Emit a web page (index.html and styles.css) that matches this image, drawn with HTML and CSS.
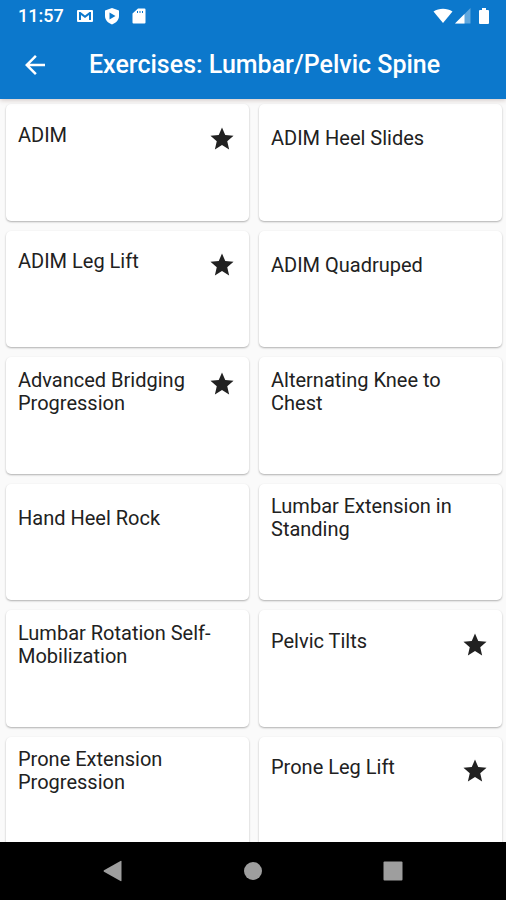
FILE: index.html
```html
<!DOCTYPE html>
<html lang="en">
<head>
<meta charset="utf-8">
<meta name="viewport" content="width=device-width, initial-scale=1">
<title>Exercises: Lumbar/Pelvic Spine</title>
<link rel="stylesheet" href="styles.css">
</head>
<body>
<svg class="defs" aria-hidden="true">
  <symbol id="star" viewBox="-1 -1 26 26"><path d="M12 17.27 18.18 21l-1.64-7.03L22 9.24l-7.19-.61L12 2 9.19 8.63 2 9.24l5.46 4.73L5.82 21z"/></symbol>
</svg>
<header class="top">
  <div class="status">
    <span class="clock">11:57</span>
    <div class="notices">
      <svg class="notice" viewBox="0 0 18 18" aria-hidden="true"><path fill-rule="evenodd" d="M2 3h14q1 0 1 1v10q0 1-1 1H2q-1 0-1-1V4q0-1 1-1zM3 5v8h2V8l4 3 4-3v5h2V5h-1.500L9 8.500 4.500 5z"/></svg>
      <svg class="notice" viewBox="0 0 18 18" aria-hidden="true"><path fill-rule="evenodd" d="M9 1l7 2.500V9c0 4-3 7-7 8.500C5 16 2 13 2 9V3.500zM6.500 5.500v7L12.500 9z"/></svg>
      <svg class="notice" viewBox="0 0 18 18" aria-hidden="true"><path fill-rule="evenodd" d="M8 1.500h6.500q1 0 1 1v13q0 1-1 1h-11q-1 0-1-1V6.500zM7 4v2h1V4zM9.500 4v2h1V4zM12 4v2h1V4z"/></svg>
    </div>
    <div class="signals">
      <svg class="wifi" viewBox="0 0 20 18" aria-hidden="true"><path d="M0.500 4.500C6 .8 14 .8 19.500 4.500L10 16z"/></svg>
      <svg class="cell" viewBox="0 0 16 18" aria-hidden="true"><path class="dim" d="M15.500 1v15.500H0z"/><path d="M9.500 7v9.500H0z"/></svg>
      <svg class="battery" viewBox="0 0 12 18" aria-hidden="true"><path d="M4 1h4v2h2q1 0 1 1v12q0 1-1 1H2q-1 0-1-1V4q0-1 1-1h2z"/></svg>
    </div>
  </div>
  <div class="appbar">
    <button class="back" type="button" aria-label="Back"><svg viewBox="0 0 24 24" aria-hidden="true"><path d="M20 11H7.830l5.590-5.590L12 4l-8 8 8 8 1.410-1.410L7.830 13H20z"/></svg></button>
    <h1 class="title">Exercises: Lumbar/Pelvic Spine</h1>
  </div>
</header>
<main class="content">
  <ul class="grid">
    <li class="cell-box"><div class="card"><div class="tile"><div class="row"><h2 class="name">ADIM</h2><svg class="star" role="img" aria-label="Favorite"><use href="#star"/></svg></div></div></div></li>
    <li class="cell-box"><div class="card"><div class="tile"><div class="row"><h2 class="name">ADIM Heel Slides</h2></div></div></div></li>
    <li class="cell-box"><div class="card"><div class="tile"><div class="row"><h2 class="name">ADIM Leg Lift</h2><svg class="star" role="img" aria-label="Favorite"><use href="#star"/></svg></div></div></div></li>
    <li class="cell-box"><div class="card"><div class="tile"><div class="row"><h2 class="name">ADIM Quadruped</h2></div></div></div></li>
    <li class="cell-box"><div class="card"><div class="tile"><div class="row"><h2 class="name">Advanced Bridging Progression</h2><svg class="star" role="img" aria-label="Favorite"><use href="#star"/></svg></div></div></div></li>
    <li class="cell-box"><div class="card"><div class="tile"><div class="row"><h2 class="name">Alternating Knee to Chest</h2></div></div></div></li>
    <li class="cell-box"><div class="card"><div class="tile"><div class="row"><h2 class="name">Hand Heel Rock</h2></div></div></div></li>
    <li class="cell-box"><div class="card"><div class="tile"><div class="row"><h2 class="name">Lumbar Extension in Standing</h2></div></div></div></li>
    <li class="cell-box"><div class="card"><div class="tile"><div class="row"><h2 class="name">Lumbar Rotation Self-Mobilization</h2></div></div></div></li>
    <li class="cell-box"><div class="card"><div class="tile"><div class="row"><h2 class="name">Pelvic Tilts</h2><svg class="star" role="img" aria-label="Favorite"><use href="#star"/></svg></div></div></div></li>
    <li class="cell-box"><div class="card"><div class="tile"><div class="row"><h2 class="name">Prone Extension Progression</h2></div></div></div></li>
    <li class="cell-box"><div class="card"><div class="tile"><div class="row"><h2 class="name">Prone Leg Lift</h2><svg class="star" role="img" aria-label="Favorite"><use href="#star"/></svg></div></div></div></li>
  </ul>
</main>
<nav class="nav" aria-label="System">
  <button class="key" type="button" aria-label="Back"><svg viewBox="0 0 24 24" aria-hidden="true"><path d="M20.500 2.500v19q0 1-1 .5L3 12.700q-1-.7 0-1.400L19.500 2q1-.5 1 .5z"/></svg></button>
  <button class="key" type="button" aria-label="Home"><svg viewBox="0 0 24 24" aria-hidden="true"><circle cx="12" cy="12" r="9"/></svg></button>
  <button class="key" type="button" aria-label="Recent apps"><svg viewBox="0 0 24 24" aria-hidden="true"><rect x="2.500" y="2.500" width="19" height="19" rx="1"/></svg></button>
</nav>
</body>
</html>
```

FILE: styles.css
```css
* {
  box-sizing: border-box;
}

body {
  margin: 0;
  height: 100vh;
  display: flex;
  flex-direction: column;
  background: #fafafa;
  color: #212121;
  font-family: Roboto, sans-serif;
}

button {
  border: 0;
  padding: 0;
  background: none;
  color: inherit;
  cursor: pointer;
}

svg {
  display: block;
  fill: currentColor;
}

.defs {
  position: absolute;
  width: 0;
  height: 0;
}

.top {
  flex: none;
  position: relative;
  background: #0c78cc;
  color: #fff;
  box-shadow: 0 1px 5px rgba(80, 30, 20, 0.25);
}

.status {
  display: flex;
  align-items: center;
  height: 31px;
  padding: 0 16px 0 18px;
}

.clock {
  font-size: 18px;
  font-weight: 500;
  line-height: 31px;
}

.notices {
  display: flex;
  gap: 9px;
  margin-left: 12px;
}

.notice {
  width: 18px;
  height: 18px;
}

.signals {
  display: flex;
  margin-left: auto;
}

.wifi {
  width: 20px;
  height: 18px;
}

.cell {
  width: 16px;
  height: 18px;
  margin: 0 7px 0 2px;
}

.dim {
  opacity: 0.35;
}

.battery {
  width: 12px;
  height: 18px;
}

.appbar {
  display: flex;
  align-items: center;
  height: 68px;
  padding: 0 20px;
}

.back svg {
  width: 30px;
  height: 30px;
}

.title {
  margin: 0 0 0 39px;
  font-size: 25px;
  font-weight: 500;
  line-height: 32px;
}

.content {
  flex: 1;
  min-height: 0;
  overflow: hidden;
}

.grid {
  display: grid;
  grid-template-columns: 1fr 1fr;
  margin: 0;
  padding: 0;
  list-style: none;
}

.cell-box {
  display: flex;
  aspect-ratio: 2 / 1;
  padding: 5px 4px 5px 6px;
}

.card {
  flex: 1;
  border-radius: 5px;
  background: #fff;
  box-shadow: 0 1px 2px rgba(0, 0, 0, 0.3);
}

.tile {
  display: flex;
  align-items: center;
  min-height: 69px;
  padding: 0 12px;
}

.row {
  flex: 1;
  display: flex;
  align-items: flex-start;
  gap: 12px;
}

.name {
  flex: 1;
  margin: 0;
  font-size: 20px;
  font-weight: 400;
  line-height: 23px;
}

.star {
  flex: none;
  width: 30px;
  height: 30px;
}

.nav {
  flex: none;
  display: flex;
  justify-content: center;
  align-items: center;
  gap: 116px;
  height: 58px;
  background: #000;
  color: #9e9e9e;
}

.key svg {
  width: 24px;
  height: 24px;
}
```
